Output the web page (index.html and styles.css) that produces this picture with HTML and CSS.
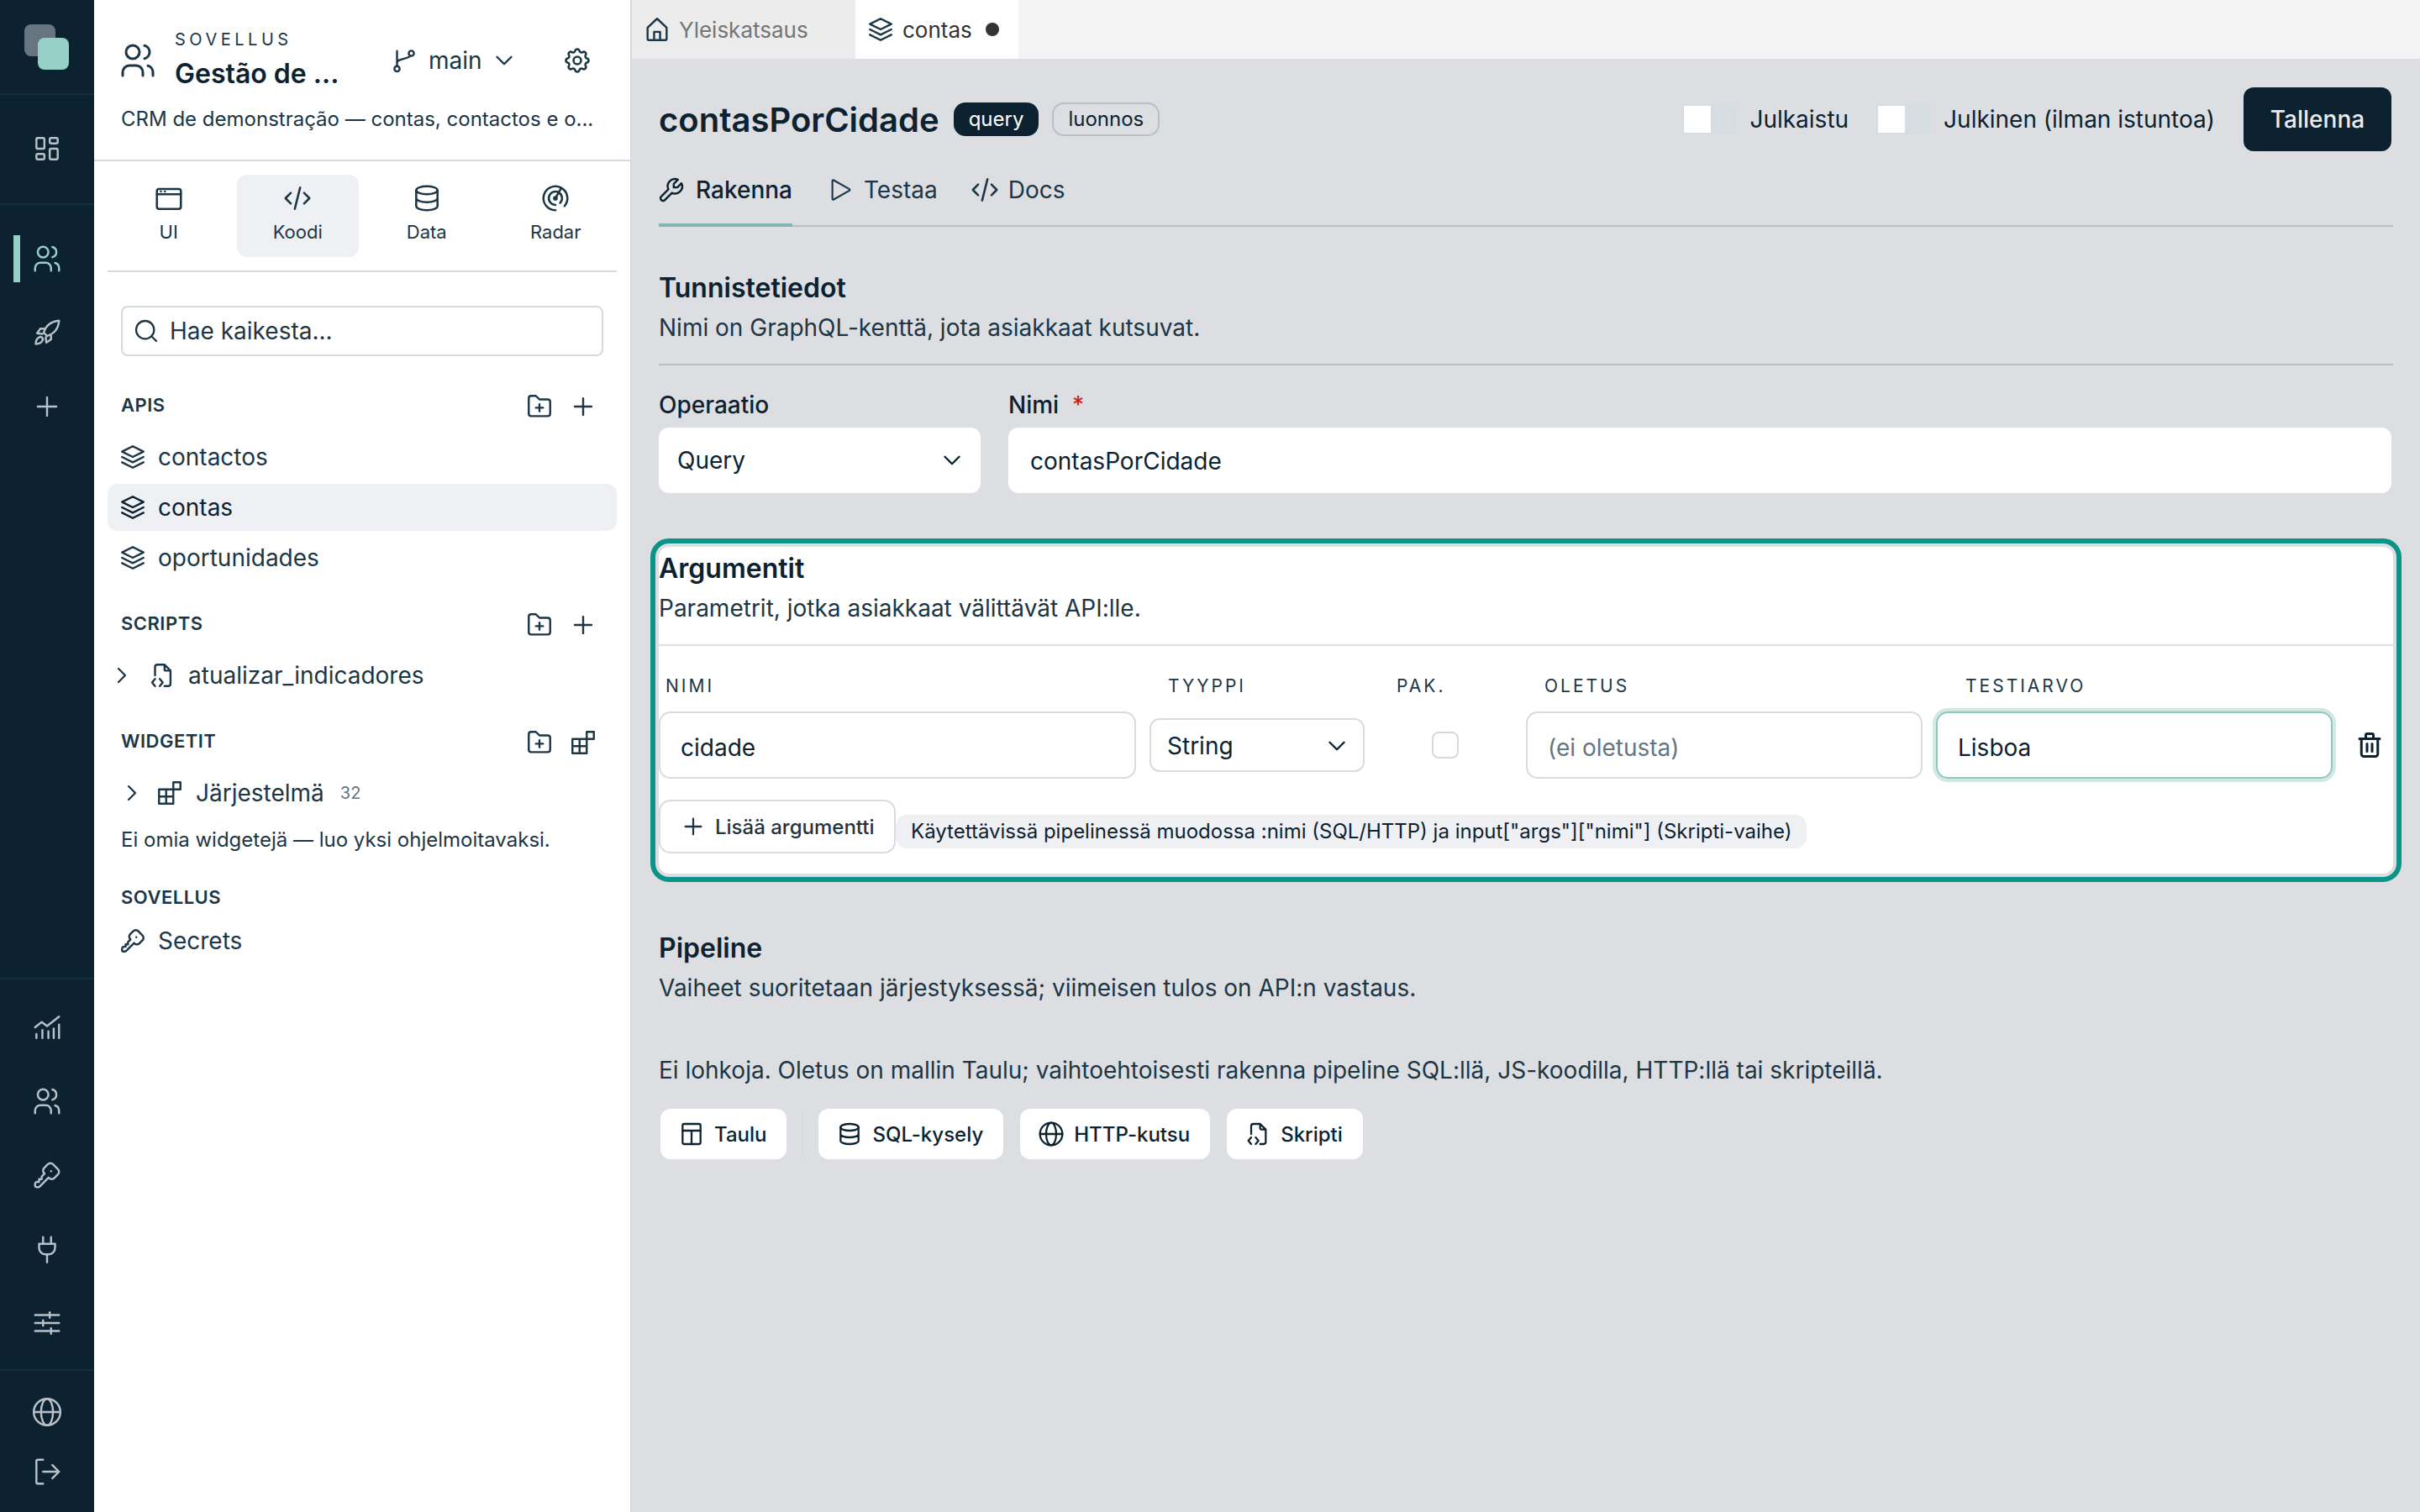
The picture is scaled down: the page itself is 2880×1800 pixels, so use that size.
FILE: index.html
```html
<!DOCTYPE html>
<html lang="en">
<head>
    <meta charset="UTF-8">
    <meta name="viewport" content="width=device-width, initial-scale=1.0">
    <title>contasPorCidade</title>
    <link rel="stylesheet" href="styles.css">
</head>
<body>
    <svg class="sprite" xmlns="http://www.w3.org/2000/svg">
        <defs>
            <symbol id="i-users" viewBox="0 0 24 24"><circle cx="9" cy="7" r="4"/><path d="M3 21v-2a4 4 0 0 1 4-4h4a4 4 0 0 1 4 4v2M16 3.13a4 4 0 0 1 0 7.75M21 21v-2a4 4 0 0 0-3-3.85"/></symbol>
            <symbol id="i-dashboard" viewBox="0 0 24 24"><path d="M5 4h4a1 1 0 0 1 1 1v6a1 1 0 0 1-1 1H5a1 1 0 0 1-1-1V5a1 1 0 0 1 1-1zM5 16h4a1 1 0 0 1 1 1v2a1 1 0 0 1-1 1H5a1 1 0 0 1-1-1v-2a1 1 0 0 1 1-1zM15 12h4a1 1 0 0 1 1 1v6a1 1 0 0 1-1 1h-4a1 1 0 0 1-1-1v-6a1 1 0 0 1 1-1zM15 4h4a1 1 0 0 1 1 1v2a1 1 0 0 1-1 1h-4a1 1 0 0 1-1-1V5a1 1 0 0 1 1-1z"/></symbol>
            <symbol id="i-rocket" viewBox="0 0 24 24"><path d="M21 3c-6 .5-10 4-11.5 9l2.500 2.500c5-1.500 8.500-5.500 9-11.500zM9.500 9H7l-2.500 3.500l4 .5M15 14.500V17l-3.500 2.500l-.5-4M6 15.500c-2 1-2.500 3-2.500 5c2 0 4-.5 5-2.500a1.800 1.800 0 0 0-2.500-2.500z"/></symbol>
            <symbol id="i-plus" viewBox="0 0 24 24"><path d="M12 5v14M5 12h14"/></symbol>
            <symbol id="i-branch" viewBox="0 0 24 24"><circle cx="6" cy="19" r="2.2"/><circle cx="18" cy="6" r="2.2"/><path d="M6 16.8V4M6 14c0-4 10-3 11-6"/></symbol>
            <symbol id="i-chevron-down" viewBox="0 0 24 24"><path d="M6 9l6 6l6-6"/></symbol>
            <symbol id="i-chevron-right" viewBox="0 0 24 24"><path d="M9 6l6 6l-6 6"/></symbol>
            <symbol id="i-gear" viewBox="0 0 24 24"><path d="M10.325 4.317c.426-1.756 2.924-1.756 3.35 0a1.724 1.724 0 0 0 2.573 1.066c1.543-.94 3.31.826 2.37 2.37a1.724 1.724 0 0 0 1.065 2.572c1.756.426 1.756 2.924 0 3.35a1.724 1.724 0 0 0-1.066 2.573c.94 1.543-.826 3.31-2.37 2.37a1.724 1.724 0 0 0-2.572 1.065c-.426 1.756-2.924 1.756-3.35 0a1.724 1.724 0 0 0-2.573-1.066c-1.543.94-3.31-.826-2.37-2.37a1.724 1.724 0 0 0-1.065-2.572c-1.756-.426-1.756-2.924 0-3.35a1.724 1.724 0 0 0 1.066-2.573c-.94-1.543.826-3.31 2.37-2.37c1 .608 2.296.07 2.572-1.065z"/><circle cx="12" cy="12" r="3"/></symbol>
            <symbol id="i-window" viewBox="0 0 24 24"><rect x="3" y="5" width="18" height="15" rx="1.5"/><path d="M3 9h18M6 7h.01M9 7h.01"/></symbol>
            <symbol id="i-code" viewBox="0 0 24 24"><path d="M7 8l-4 4l4 4M17 8l4 4l-4 4M14 4l-4 16"/></symbol>
            <symbol id="i-database" viewBox="0 0 24 24"><ellipse cx="12" cy="6" rx="8" ry="3"/><path d="M4 6v6a8 3 0 0 0 16 0V6M4 12v6a8 3 0 0 0 16 0v-6"/></symbol>
            <symbol id="i-radar" viewBox="0 0 24 24"><circle cx="12" cy="12" r="1"/><path d="M15.51 15.56a5 5 0 1 0-3.51 1.44M18.832 17.86a9 9 0 1 0-6.832 3.14M12 12l4-7"/></symbol>
            <symbol id="i-search" viewBox="0 0 24 24"><circle cx="11" cy="11" r="8"/><path d="M21 21l-4.3-4.3"/></symbol>
            <symbol id="i-folder-plus" viewBox="0 0 24 24"><path d="M5 3h4l3 3h7a2 2 0 0 1 2 2v10a2 2 0 0 1-2 2H5a2 2 0 0 1-2-2V5a2 2 0 0 1 2-2zM12 10v6M9 13h6"/></symbol>
            <symbol id="i-stack" viewBox="0 0 24 24"><path d="M12 3l-9 4.500l9 4.500l9-4.500zM3 12l9 4.500l9-4.500M3 16.500l9 4.500l9-4.500"/></symbol>
            <symbol id="i-file-code" viewBox="0 0 24 24"><path d="M14 3v4a1 1 0 0 0 1 1h4M6 12V5a2 2 0 0 1 2-2h6l5 5v11a2 2 0 0 1-2 2h-3M6 15l-2.500 3l2.500 3M10 15l2.500 3l-2.500 3"/></symbol>
            <symbol id="i-widgets" viewBox="0 0 24 24"><path d="M3 9h12v12H3zM9 9v12M3 15h12M15 3h6v6h-6z"/></symbol>
            <symbol id="i-key" viewBox="0 0 24 24"><path d="M16.555 3.843l3.602 3.602a2.877 2.877 0 0 1 0 4.069l-2.643 2.643a2.877 2.877 0 0 1-4.069 0l-.301-.301l-6.558 6.558a2 2 0 0 1-1.239.578l-.175.008h-1.172a1 1 0 0 1-.993-.883l-.007-.117v-1.172a2 2 0 0 1 .467-1.284l.119-.13l.414-.414h2v-2h2v-2l2.144-2.144l-.301-.301a2.877 2.877 0 0 1 0-4.069l2.643-2.643a2.877 2.877 0 0 1 4.069 0zM15 9h.01"/></symbol>
            <symbol id="i-chart" viewBox="0 0 24 24"><path d="M3 12l5-4l4 3l9-7M4 20v-3M8.500 20v-6M13 20v-5M17 20v-7M21 20v-10"/></symbol>
            <symbol id="i-plug" viewBox="0 0 24 24"><path d="M9 3v5M15 3v5M6 8h12v3a5 5 0 0 1-5 5h-2a5 5 0 0 1-5-5zM12 16v6"/></symbol>
            <symbol id="i-sliders" viewBox="0 0 24 24"><path d="M3 6h18M14 4v4M3 12h18M9 10v4M3 18h18M15 16v4"/></symbol>
            <symbol id="i-globe" viewBox="0 0 24 24"><circle cx="12" cy="12" r="10"/><ellipse cx="12" cy="12" rx="4.500" ry="10"/><path d="M2 12h20"/></symbol>
            <symbol id="i-logout" viewBox="0 0 24 24"><path d="M9 3H5a1 1 0 0 0-1 1v16a1 1 0 0 0 1 1h4M9 12h12M16 7l5 5l-5 5"/></symbol>
            <symbol id="i-home" viewBox="0 0 24 24"><path d="M4 10.500L12 3l8 7.500V20a1 1 0 0 1-1 1H5a1 1 0 0 1-1-1zM9.500 21v-7h5v7"/></symbol>
            <symbol id="i-wrench" viewBox="0 0 24 24"><path d="M17 10h-3V7l3.500-3.500a6 6 0 0 0-8 8l-6 6a2 2 0 0 0 3 3l6-6a6 6 0 0 0 8-8z"/></symbol>
            <symbol id="i-play" viewBox="0 0 24 24"><path d="M4.500 3.500v17a.8.8 0 0 0 1.200.7l15-8.500a.8.8 0 0 0 0-1.400l-15-8.500a.8.8 0 0 0-1.200.7z"/></symbol>
            <symbol id="i-trash" viewBox="0 0 24 24"><path d="M4 7h16M10 11v6M14 11v6M5.500 7v12a2 2 0 0 0 2 2h9a2 2 0 0 0 2-2V7M9 7V4a1 1 0 0 1 1-1h4a1 1 0 0 1 1 1v3"/></symbol>
            <symbol id="i-table" viewBox="0 0 24 24"><rect x="4" y="3" width="16" height="18" rx="1.500"/><path d="M4 9h16M12 9v12"/></symbol>
        </defs>
    </svg>

    <div class="app">
        <nav class="rail">
            <div class="rail-logo">
                <span class="logo-back"></span>
                <span class="logo-front"></span>
            </div>
            <div class="rail-group rail-home">
                <a class="rail-item"><svg class="icon"><use href="#i-dashboard"/></svg></a>
            </div>
            <div class="rail-group rail-apps">
                <a class="rail-item active"><svg class="icon"><use href="#i-users"/></svg></a>
                <a class="rail-item"><svg class="icon"><use href="#i-rocket"/></svg></a>
                <a class="rail-item"><svg class="icon"><use href="#i-plus"/></svg></a>
            </div>
            <div class="rail-group rail-admin">
                <a class="rail-item"><svg class="icon"><use href="#i-chart"/></svg></a>
                <a class="rail-item"><svg class="icon"><use href="#i-users"/></svg></a>
                <a class="rail-item"><svg class="icon"><use href="#i-key"/></svg></a>
                <a class="rail-item"><svg class="icon"><use href="#i-plug"/></svg></a>
                <a class="rail-item"><svg class="icon"><use href="#i-sliders"/></svg></a>
            </div>
            <div class="rail-group rail-footer">
                <a class="rail-item small"><svg class="icon"><use href="#i-globe"/></svg></a>
                <a class="rail-item small"><svg class="icon"><use href="#i-logout"/></svg></a>
            </div>
        </nav>

        <aside class="sidebar">
            <div class="app-head">
                <div class="app-row">
                    <svg class="icon icon-app"><use href="#i-users"/></svg>
                    <div class="app-title">
                        <div class="eyebrow">SOVELLUS</div>
                        <div class="app-name">Gestão de ...</div>
                    </div>
                    <div class="branch">
                        <svg class="icon"><use href="#i-branch"/></svg>
                        <span>main</span>
                        <svg class="icon branch-chevron"><use href="#i-chevron-down"/></svg>
                    </div>
                    <svg class="icon gear"><use href="#i-gear"/></svg>
                </div>
                <div class="app-desc">CRM de demonstração — contas, contactos e o...</div>
            </div>

            <div class="mode-tabs">
                <div class="mode-tab"><svg class="icon icon-md"><use href="#i-window"/></svg><span>UI</span></div>
                <div class="mode-tab active"><svg class="icon icon-md"><use href="#i-code"/></svg><span>Koodi</span></div>
                <div class="mode-tab"><svg class="icon icon-md"><use href="#i-database"/></svg><span>Data</span></div>
                <div class="mode-tab"><svg class="icon icon-md"><use href="#i-radar"/></svg><span>Radar</span></div>
            </div>

            <div class="search">
                <svg class="icon icon-search"><use href="#i-search"/></svg>
                <span>Hae kaikesta...</span>
            </div>

            <div class="tree-group first">
                <div class="tree-head">
                    <span>APIS</span>
                    <div class="tree-actions">
                        <svg class="icon"><use href="#i-folder-plus"/></svg>
                        <svg class="icon"><use href="#i-plus"/></svg>
                    </div>
                </div>
                <div class="tree-list">
                    <div class="tree-item"><svg class="icon"><use href="#i-stack"/></svg><span>contactos</span></div>
                    <div class="tree-item active"><svg class="icon"><use href="#i-stack"/></svg><span>contas</span></div>
                    <div class="tree-item"><svg class="icon"><use href="#i-stack"/></svg><span>oportunidades</span></div>
                </div>
            </div>

            <div class="tree-group">
                <div class="tree-head">
                    <span>SCRIPTS</span>
                    <div class="tree-actions">
                        <svg class="icon"><use href="#i-folder-plus"/></svg>
                        <svg class="icon"><use href="#i-plus"/></svg>
                    </div>
                </div>
                <div class="tree-list">
                    <div class="tree-item folder">
                        <svg class="icon icon-chev"><use href="#i-chevron-right"/></svg>
                        <svg class="icon"><use href="#i-file-code"/></svg>
                        <span>atualizar_indicadores</span>
                    </div>
                </div>
            </div>

            <div class="tree-group">
                <div class="tree-head">
                    <span>WIDGETIT</span>
                    <div class="tree-actions">
                        <svg class="icon"><use href="#i-folder-plus"/></svg>
                        <svg class="icon"><use href="#i-widgets"/></svg>
                    </div>
                </div>
                <div class="tree-list">
                    <div class="tree-item folder nested">
                        <svg class="icon icon-chev"><use href="#i-chevron-right"/></svg>
                        <svg class="icon"><use href="#i-widgets"/></svg>
                        <span>Järjestelmä</span>
                        <span class="count">32</span>
                    </div>
                </div>
                <div class="tree-note">Ei omia widgetejä — luo yksi ohjelmoitavaksi.</div>
            </div>

            <div class="tree-group last">
                <div class="tree-head plain"><span>SOVELLUS</span></div>
                <div class="tree-list">
                    <div class="tree-item"><svg class="icon"><use href="#i-key"/></svg><span>Secrets</span></div>
                </div>
            </div>
        </aside>

        <main class="main">
            <div class="tabbar">
                <div class="tab"><svg class="icon"><use href="#i-home"/></svg><span>Yleiskatsaus</span></div>
                <div class="tab active"><svg class="icon"><use href="#i-stack"/></svg><span>contas</span><i class="dot"></i></div>
            </div>

            <div class="content">
                <div class="page-head">
                    <h1>contasPorCidade</h1>
                    <span class="badge dark">query</span>
                    <span class="badge outline">luonnos</span>
                    <div class="page-actions">
                        <div class="switch"><i></i></div>
                        <span class="switch-label">Julkaistu</span>
                        <div class="switch"><i></i></div>
                        <span class="switch-label">Julkinen (ilman istuntoa)</span>
                        <button class="save">Tallenna</button>
                    </div>
                </div>

                <div class="subtabs">
                    <div class="subtab active"><svg class="icon icon-wrench"><use href="#i-wrench"/></svg><span>Rakenna</span></div>
                    <div class="subtab"><svg class="icon"><use href="#i-play"/></svg><span>Testaa</span></div>
                    <div class="subtab"><svg class="icon icon-code"><use href="#i-code"/></svg><span>Docs</span></div>
                </div>

                <section class="block first">
                    <div class="block-head">
                        <h2>Tunnistetiedot</h2>
                        <p>Nimi on GraphQL-kenttä, jota asiakkaat kutsuvat.</p>
                    </div>
                    <div class="fields">
                        <div class="field op">
                            <label>Operaatio</label>
                            <div class="control">Query<svg class="icon"><use href="#i-chevron-down"/></svg></div>
                        </div>
                        <div class="field name">
                            <label>Nimi <em>*</em></label>
                            <div class="control">contasPorCidade</div>
                        </div>
                    </div>
                </section>

                <section class="block highlighted">
                    <div class="block-head">
                        <h2>Argumentit</h2>
                        <p>Parametrit, jotka asiakkaat välittävät API:lle.</p>
                    </div>
                    <div class="args">
                        <div class="arg-label first">NIMI</div>
                        <div class="arg-label">TYYPPI</div>
                        <div class="arg-label">PAK.</div>
                        <div class="arg-label">OLETUS</div>
                        <div class="arg-label test">TESTIARVO</div>
                        <div></div>

                        <div class="arg-input">cidade</div>
                        <div class="arg-select">String<svg class="icon"><use href="#i-chevron-down"/></svg></div>
                        <div class="arg-check"><i></i></div>
                        <div class="arg-input placeholder">(ei oletusta)</div>
                        <div class="arg-input focused">Lisboa</div>
                        <div class="arg-trash"><svg class="icon"><use href="#i-trash"/></svg></div>
                    </div>
                    <div class="arg-foot">
                        <button class="add-arg"><svg class="icon"><use href="#i-plus"/></svg>Lisää argumentti</button>
                        <span class="hint">Käytettävissä pipelinessä muodossa :nimi (SQL/HTTP) ja input["args"]["nimi"] (Skripti-vaihe)</span>
                    </div>
                </section>

                <section class="block pipeline">
                    <div class="block-head bare">
                        <h2>Pipeline</h2>
                        <p>Vaiheet suoritetaan järjestyksessä; viimeisen tulos on API:n vastaus.</p>
                    </div>
                    <p class="empty">Ei lohkoja. Oletus on mallin Taulu; vaihtoehtoisesti rakenna pipeline SQL:llä, JS-koodilla, HTTP:llä tai skripteillä.</p>
                    <div class="step-buttons">
                        <button class="step"><svg class="icon"><use href="#i-table"/></svg>Taulu</button>
                        <span class="step-sep"></span>
                        <button class="step"><svg class="icon"><use href="#i-database"/></svg>SQL-kysely</button>
                        <button class="step"><svg class="icon"><use href="#i-globe"/></svg>HTTP-kutsu</button>
                        <button class="step"><svg class="icon"><use href="#i-file-code"/></svg>Skripti</button>
                    </div>
                </section>
            </div>
        </main>
    </div>
</body>
</html>
```

FILE: styles.css
```css
* {
    box-sizing: border-box;
}
body {
    margin: 0;
    font-family: "Inter", "Noto Sans", sans-serif;
    color: #1c3645;
    background-color: #dcdee2;
}
h1, h2, p {
    margin: 0;
}
button {
    font-family: inherit;
    cursor: pointer;
}
.sprite {
    position: absolute;
    width: 0;
    height: 0;
}
.icon {
    width: 34px;
    height: 34px;
    flex: none;
    fill: none;
    stroke: currentColor;
    stroke-width: 1.7;
    stroke-linecap: round;
    stroke-linejoin: round;
}
.icon-md {
    width: 38px;
    height: 38px;
    stroke-width: 1.6;
}
.app {
    display: flex;
    height: 1800px;
    overflow: hidden;
}

/* left rail */
.rail {
    width: 112px;
    flex: none;
    display: flex;
    flex-direction: column;
    background-color: #0c2230;
    color: #b7c1c7;
}
.rail-logo {
    position: relative;
    height: 113px;
    border-bottom: 2px solid #14303f;
}
.logo-back, .logo-front {
    position: absolute;
    width: 37px;
    height: 38px;
    border-radius: 8px;
}
.logo-back {
    left: 29px;
    top: 29px;
    background-color: #66757f;
}
.logo-front {
    left: 45px;
    top: 45px;
    background-color: #96cfc5;
}
.rail-group {
    display: flex;
    flex-direction: column;
    flex: none;
    border-bottom: 2px solid #14303f;
}
.rail-home {
    height: 131px;
    padding-top: 20px;
}
.rail-apps {
    height: 922px;
    padding-top: 20px;
}
.rail-admin {
    height: 466px;
    padding-top: 13px;
}
.rail-footer {
    flex: 1;
    border-bottom: none;
    padding-top: 13px;
}
.rail-item {
    position: relative;
    height: 88px;
    flex: none;
    display: flex;
    align-items: center;
    justify-content: center;
}
.rail-item.small {
    height: 71px;
}
.rail-item.active {
    color: #96cfc5;
}
.rail-item.active::before {
    content: "";
    position: absolute;
    left: 16px;
    top: 16px;
    width: 8px;
    height: 56px;
    background-color: #96cfc5;
}
.rail-item .icon {
    width: 38px;
    height: 38px;
    stroke-width: 1.55;
}

/* sidebar */
.sidebar {
    width: 640px;
    flex: none;
    background-color: #fff;
    border-right: 2px solid #d5dae0;
}
.app-head {
    height: 192px;
    padding: 26px 34px 0 32px;
    border-bottom: 2px solid #d5dae0;
}
.app-row {
    display: flex;
    align-items: center;
    height: 92px;
}
.icon-app {
    width: 48px;
    height: 48px;
    stroke-width: 1.5;
    margin-left: -4px;
    margin-right: 20px;
}
.app-title {
    width: 195px;
    margin-top: -2px;
    margin-right: 61px;
}
.eyebrow {
    font-size: 20px;
    line-height: 28px;
    letter-spacing: 4.5px;
    margin-bottom: 5px;
}
.app-name {
    font-size: 32px;
    line-height: 44px;
    font-weight: 600;
    color: #0c2230;
    white-space: nowrap;
}
.branch {
    display: flex;
    align-items: center;
    gap: 12px;
    font-size: 28px;
    margin-right: 52px;
}
.branch-chevron {
    margin-left: -3px;
}
.gear {
    width: 36px;
    height: 36px;
}
.app-desc {
    margin-top: 2px;
    font-size: 24px;
    line-height: 44px;
    white-space: nowrap;
}
.mode-tabs {
    display: flex;
    gap: 8px;
    margin: 16px 16px 0;
    height: 116px;
    padding-bottom: 16px;
    border-bottom: 2px solid #d5dae0;
}
.mode-tab {
    flex: 1;
    display: flex;
    flex-direction: column;
    align-items: center;
    padding-top: 9px;
    gap: 4px;
    border-radius: 12px;
    font-size: 22px;
    line-height: 34px;
}
.mode-tab.active {
    background-color: #eff0f4;
}
.search {
    display: flex;
    align-items: center;
    gap: 12px;
    height: 60px;
    margin: 40px 32px 0;
    padding-left: 12px;
    border: 2px solid #d5dae0;
    border-radius: 8px;
    font-size: 28px;
}
.icon-search {
    width: 32px;
    height: 32px;
}
.tree-group {
    margin: 24px 16px 0;
}
.tree-group.first {
    margin-top: 32px;
}
.tree-group.last {
    margin-top: 20px;
}
.tree-head {
    display: flex;
    align-items: center;
    justify-content: space-between;
    height: 56px;
    padding: 0 23px 0 16px;
    font-size: 22px;
    font-weight: 600;
    letter-spacing: 0.5px;
}
.tree-head > span {
    margin-top: -5px;
}
.tree-head.plain {
    height: 40px;
}
.tree-head.plain > span {
    margin-top: 0;
}
.tree-actions {
    display: flex;
    gap: 18px;
}
.tree-list {
    display: flex;
    flex-direction: column;
    gap: 4px;
    margin-top: 4px;
}
.tree-item {
    display: flex;
    align-items: center;
    gap: 13px;
    height: 56px;
    padding-left: 13px;
    border-radius: 12px;
    font-size: 28px;
}
.tree-item.active {
    background-color: #eff0f4;
    color: #0c2230;
}
.tree-item.folder {
    gap: 14px;
    padding-left: 1px;
}
.tree-item.folder .icon-chev {
    width: 32px;
    height: 32px;
    margin-right: 1px;
}
.tree-item.folder.nested {
    padding-left: 13px;
}
.tree-item.folder.nested .icon-chev {
    margin-right: -2px;
}
.count {
    margin-left: 5px;
    font-size: 20px;
    color: #66757f;
}
.tree-note {
    height: 56px;
    padding-left: 16px;
    font-size: 24px;
    line-height: 56px;
}

/* main area */
.main {
    flex: 1;
    min-width: 0;
}
.tabbar {
    display: flex;
    height: 70px;
    background-color: #f3f3f3;
}
.tab {
    display: flex;
    align-items: center;
    gap: 9px;
    padding: 0 13px;
    width: 266px;
    background-color: #ececec;
    color: #757575;
    font-size: 26px;
}
.tab .icon {
    color: #1c3645;
}
.tab.active {
    width: 194px;
    background-color: #fff;
    color: #333;
}
.dot {
    width: 16px;
    height: 16px;
    margin-left: 7px;
    border-radius: 50%;
    background-color: #333;
}
.content {
    padding: 34px 32px 0;
}
.page-head {
    display: flex;
    align-items: center;
    height: 76px;
    padding-right: 2px;
}
h1 {
    font-size: 40px;
    font-weight: 600;
    color: #0c2230;
    margin-right: 17px;
}
.badge {
    height: 40px;
    line-height: 36px;
    padding: 0 16px;
    border: 2px solid transparent;
    border-radius: 14px;
    font-size: 24px;
    margin-right: 16px;
}
.badge.outline {
    padding: 0 17px;
    border-color: #b8c0c8;
    color: #0c2230;
}
.badge.dark {
    background-color: #0c2230;
    color: #fff;
}
.page-actions {
    margin-left: auto;
    display: flex;
    align-items: center;
}
.switch {
    width: 64px;
    height: 36px;
    padding: 2px;
    background-color: #d5dde3;
}
.switch i {
    display: block;
    width: 32px;
    height: 32px;
    background-color: #fff;
}
.switch-label {
    margin: 0 33px 0 16px;
    font-size: 28px;
    color: #0c2230;
}
.save {
    width: 176px;
    height: 76px;
    margin-left: 1px;
    border: none;
    border-radius: 12px;
    background-color: #0c2230;
    color: #e8ecee;
    font-size: 28px;
    font-weight: 500;
}
.subtabs {
    display: flex;
    gap: 41px;
    height: 90px;
    border-bottom: 2px solid #b8c0c8;
}
.subtab {
    display: flex;
    align-items: center;
    gap: 13px;
    height: 90px;
    padding-top: 5px;
    border-bottom: 4px solid transparent;
    font-size: 28px;
}
.subtab.active {
    gap: 14px;
    margin-right: 1px;
    border-bottom-color: #84b5b0;
    color: #0c2230;
    font-weight: 500;
}
.subtab .icon {
    width: 30px;
    height: 30px;
}
.subtab .icon-wrench {
    width: 34px;
    height: 34px;
    margin: 0 -2px;
}
.subtab .icon-code {
    width: 38px;
    height: 38px;
    margin: 0 -4px;
    stroke-width: 1.6;
}
.block {
    margin-top: 64px;
}
.block.first {
    margin-top: 47px;
}
.block.pipeline {
    margin-top: 63px;
}
.block-head {
    height: 118px;
    border-bottom: 2px solid #b8c0c8;
}
.block-head.bare {
    height: auto;
    border-bottom: none;
}
h2 {
    padding-top: 1px;
    font-size: 32px;
    line-height: 49px;
    font-weight: 600;
    color: #0c2230;
}
.block p {
    font-size: 28px;
    line-height: 46px;
}
.fields {
    display: flex;
    gap: 33px;
    margin-top: 27px;
    padding-right: 2px;
}
.field label {
    display: block;
    font-size: 28px;
    font-weight: 500;
    line-height: 40px;
    margin-bottom: 7px;
    color: #0c2230;
}
.field em {
    font-style: normal;
    color: #cc1f1f;
    margin-left: 8px;
}
.field.op {
    width: 383px;
}
.field.name {
    flex: 1;
}
.control {
    display: flex;
    align-items: center;
    justify-content: space-between;
    height: 78px;
    padding: 0 17px 0 22px;
    background-color: #fff;
    border-radius: 12px;
    font-size: 28px;
    color: #0c2230;
}
.field.name .control {
    padding: 2px 26px 0;
}
.block.highlighted {
    background-color: #fff;
    padding-bottom: 24px;
    border-radius: 12px;
    outline: 6px solid #0d9488;
    outline-offset: 4px;
}
.block.highlighted .block-head {
    border-bottom-color: #dcdfe4;
}
.args {
    display: grid;
    grid-template-columns: 568px 256px 160px 472px 472px 56px;
    grid-template-rows: 40px 80px;
    column-gap: 16px;
    row-gap: 11px;
    align-items: center;
    margin-top: 27px;
}
.arg-label {
    padding-left: 22px;
    font-size: 21px;
    letter-spacing: 3px;
}
.arg-label.first {
    padding-left: 8px;
}
.arg-label.test {
    padding-left: 35px;
}
.arg-input {
    display: flex;
    align-items: center;
    height: 80px;
    padding: 6px 24px 0;
    border: 2px solid #d8dce2;
    border-radius: 14px;
    font-size: 28px;
    color: #0c2230;
}
.arg-input.placeholder {
    color: #66757f;
}
.arg-input.focused {
    border-color: #8fc7bd;
    box-shadow: 0 0 0 4px #d2e8e4;
}
.arg-select {
    display: flex;
    align-items: center;
    justify-content: space-between;
    height: 64px;
    padding: 2px 14px 0 19px;
    border: 2px solid #d8dce2;
    border-radius: 12px;
    font-size: 28px;
    color: #0c2230;
}
.arg-check {
    display: flex;
    justify-content: center;
}
.arg-check i {
    display: block;
    width: 32px;
    height: 32px;
    border: 2px solid #d5dae0;
    border-radius: 8px;
}
.arg-trash {
    display: flex;
    justify-content: center;
    color: #0c2230;
}
.arg-trash .icon {
    width: 36px;
    height: 36px;
    stroke-width: 2;
}
.arg-foot {
    display: flex;
    align-items: flex-start;
    margin-top: 25px;
}
.add-arg {
    display: flex;
    align-items: center;
    gap: 10px;
    width: 282px;
    height: 64px;
    padding: 0 18px 0 23px;
    background-color: #fff;
    border: 2px solid #d8dce2;
    border-radius: 14px;
    font-size: 24px;
    font-weight: 500;
    color: #1c3645;
}
.add-arg .icon {
    width: 32px;
    height: 32px;
}
.hint {
    margin-top: 18px;
    padding: 0 18px;
    height: 40px;
    line-height: 40px;
    background-color: #eff0f4;
    border-radius: 14px;
    font-size: 24px;
    color: #0c2230;
}
.block.pipeline .empty {
    margin-top: 53px;
    line-height: 44px;
}
.step-buttons {
    display: flex;
    align-items: center;
    gap: 20px;
    margin-top: 24px;
    margin-left: 2px;
}
.step {
    display: flex;
    align-items: center;
    gap: 11px;
    height: 60px;
    padding: 0 24px 0 21px;
    background-color: #fff;
    border: none;
    border-radius: 12px;
    font-size: 24px;
    font-weight: 500;
    color: #0c2230;
}
.step .icon {
    width: 32px;
    height: 32px;
}
.step-sep {
    width: 0;
    height: 60px;
    margin: 0 -2px;
    border-left: 2px solid #d8dbdf;
}
```
